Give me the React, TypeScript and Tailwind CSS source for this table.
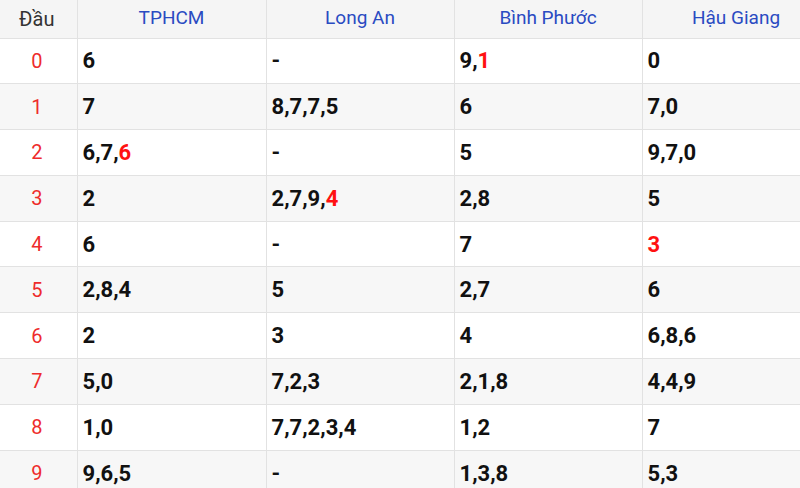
import React from 'react';

type Cell = string[];

const provinces = ['TPHCM', 'Long An', 'Bình Phước', 'Hậu Giang'];

// "*" marks a red (special) digit
const rows: Cell[] = [
  ['6', '-', '9,*1', '0'],
  ['7', '8,7,7,5', '6', '7,0'],
  ['6,7,*6', '-', '5', '9,7,0'],
  ['2', '2,7,9,*4', '2,8', '5'],
  ['6', '-', '7', '*3'],
  ['2,8,4', '5', '2,7', '6'],
  ['2', '3', '4', '6,8,6'],
  ['5,0', '7,2,3', '2,1,8', '4,4,9'],
  ['1,0', '7,7,2,3,4', '1,2', '7'],
  ['9,6,5', '-', '1,3,8', '5,3'],
];

const Digits = ({ value }: { value: string }) => {
  const parts = value.split(',');
  return (
    <>
      {parts.map((p, i) => (
        <React.Fragment key={i}>
          {p.startsWith('*') ? <span className="text-[#ff1111]">{p.slice(1)}</span> : p}
          {i < parts.length - 1 && ','}
        </React.Fragment>
      ))}
    </>
  );
};

const App = () => {
  return (
    <div className="w-[800px] h-[488px] overflow-hidden bg-white" style={{ fontFamily: 'Roboto, "Noto Sans", sans-serif' }}>
      <table className="table-fixed border-collapse w-[829px]">
        <colgroup>
          <col className="w-[77px]" />
          <col className="w-[189px]" />
          <col className="w-[188px]" />
          <col className="w-[188px]" />
          <col className="w-[188px]" />
        </colgroup>
        <thead>
          <tr className="h-[38px] bg-[#f5f5f5]">
            <th className="border border-t-0 border-l-0 border-[#e2e2e2] text-[20px] font-normal text-[#333] text-center p-0 pr-[3px]">Đầu</th>
            {provinces.map((p) => (
              <th key={p} className="border border-t-0 border-[#e2e2e2] text-[19px] font-normal text-[#2a4bc2] text-center p-0 pb-[2px]">
                {p}
              </th>
            ))}
          </tr>
        </thead>
        <tbody>
          {rows.map((r, i) => (
            <tr key={i} className={`h-[45.8px] ${i % 2 === 1 ? 'bg-[#f7f7f7]' : 'bg-white'}`}>
              <td className="border border-l-0 border-[#e2e2e2] text-center text-[20px] text-[#ee2c2c] p-0 pr-[3px]">{i}</td>
              {r.map((v, j) => (
                <td key={j} className="border border-[#e2e2e2] pl-[5px] text-[22px] font-bold text-[#111] p-0">
                  <Digits value={v} />
                </td>
              ))}
            </tr>
          ))}
        </tbody>
      </table>
    </div>
  );
};

export default App;
